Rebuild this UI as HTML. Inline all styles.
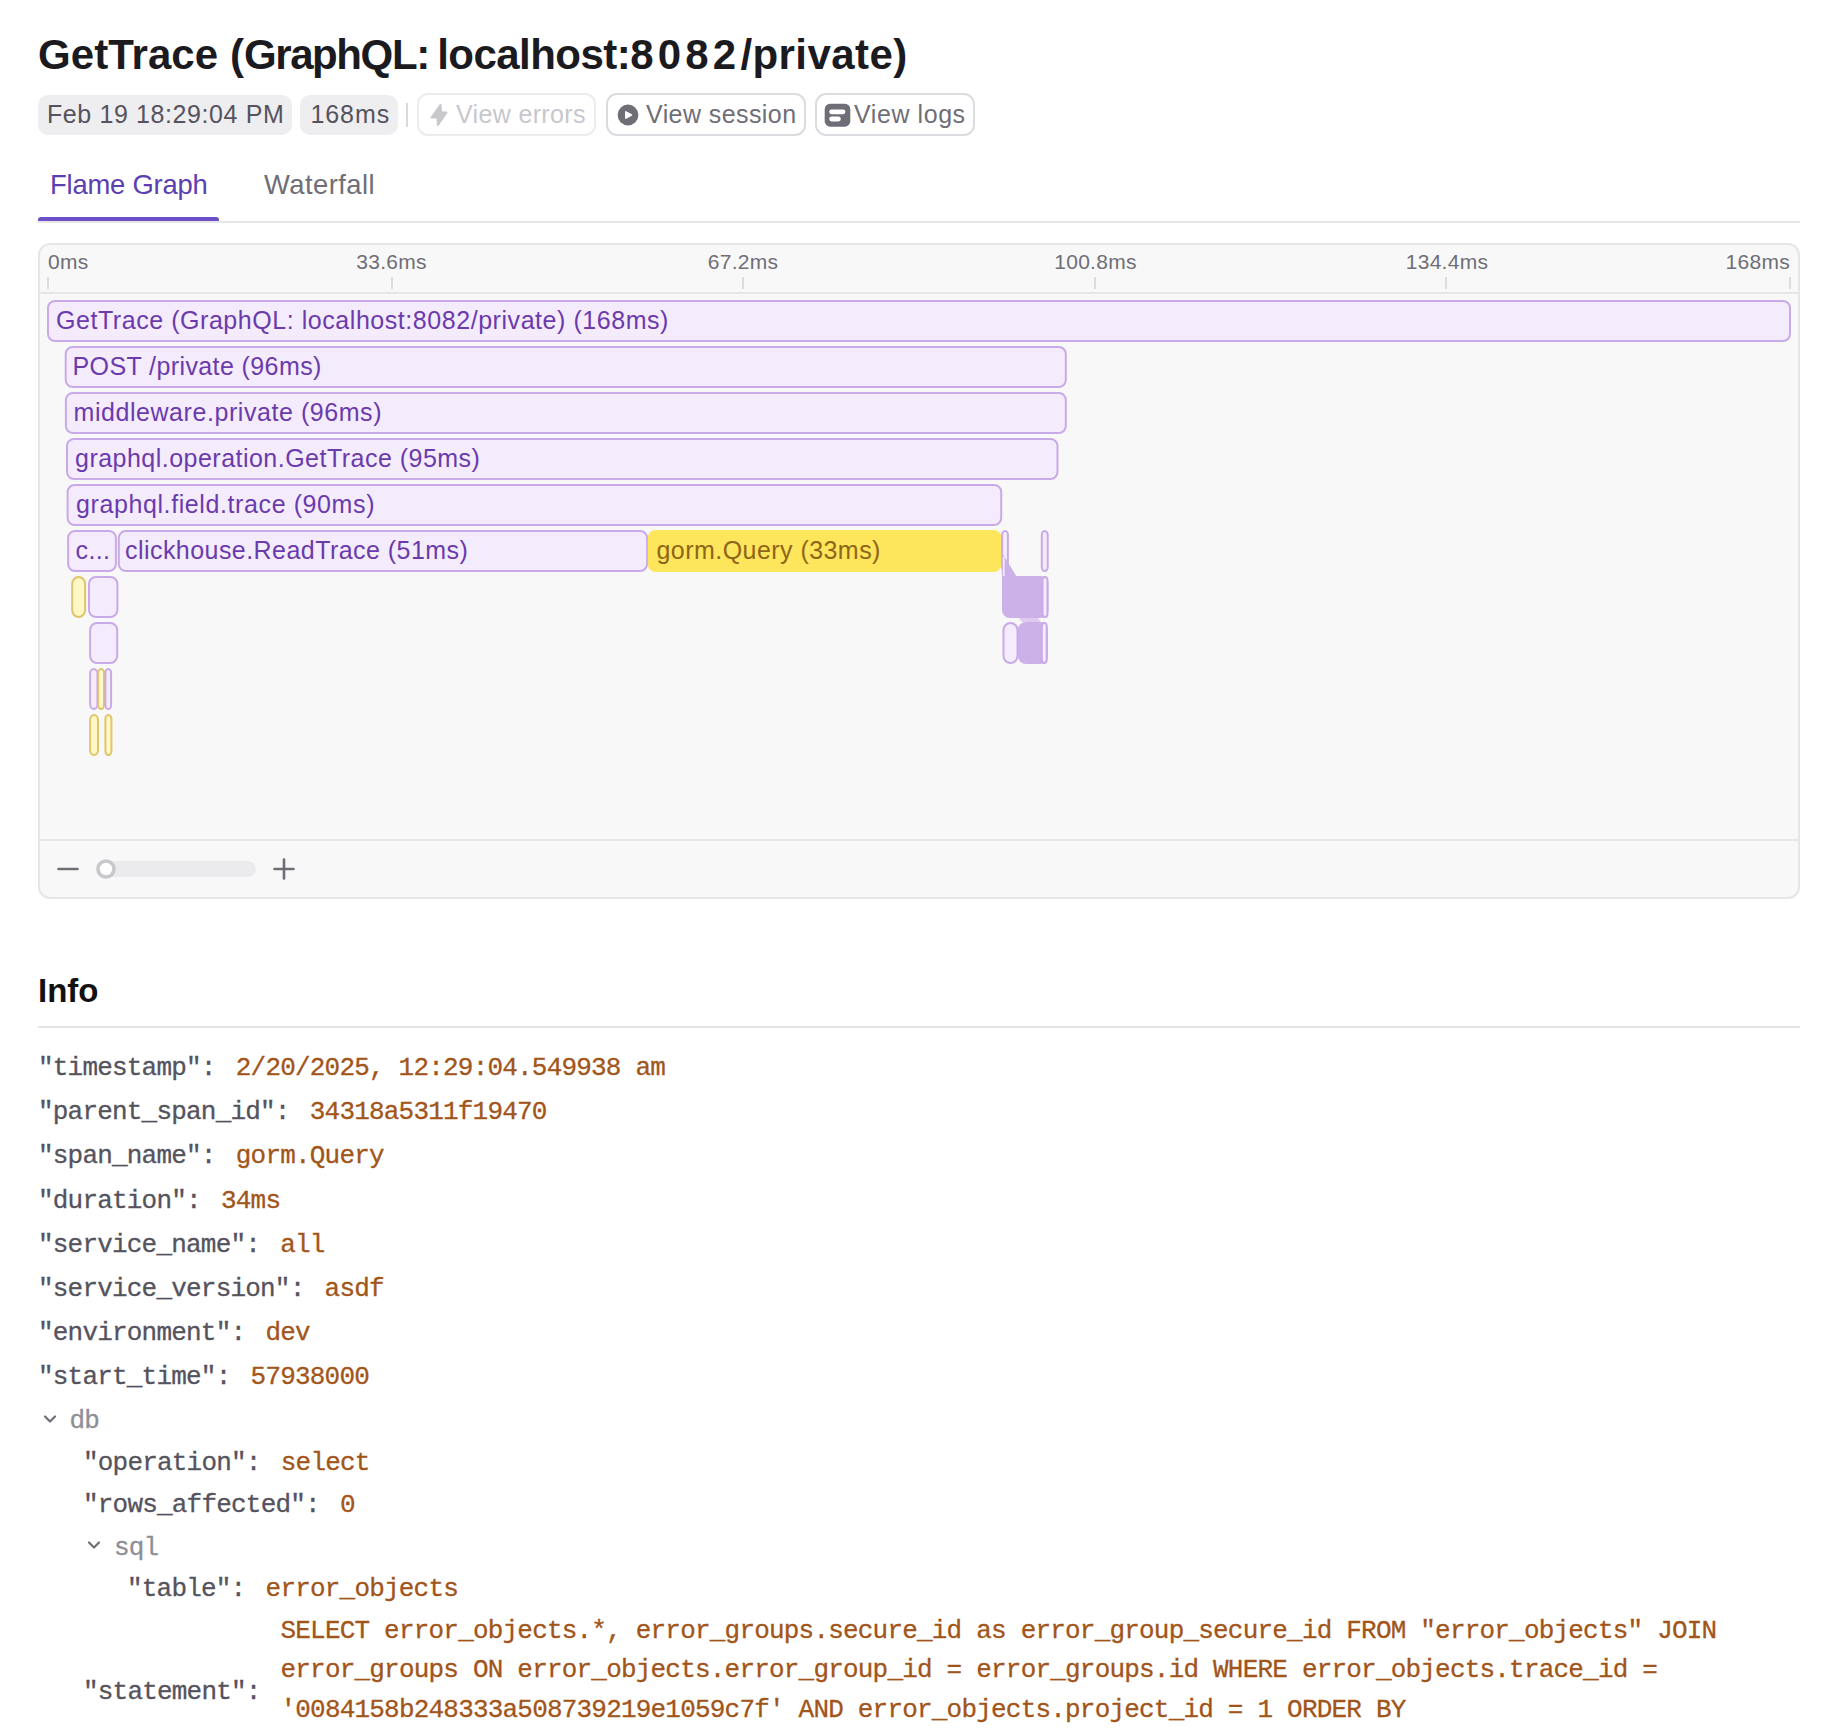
<!DOCTYPE html>
<html><head><meta charset="utf-8">
<style>
html,body{margin:0;padding:0;background:#fff;width:1840px;height:1732px;overflow:hidden;position:relative}
body{font-family:"Liberation Sans",sans-serif}
.a{position:absolute;white-space:pre;line-height:1}
.m{font-family:"Liberation Mono",monospace;font-size:26px;line-height:26px;letter-spacing:-0.8px;position:absolute;white-space:pre;color:#55535d;-webkit-text-stroke:0.3px currentColor}
.v{color:#a2551a}
.box{position:absolute;box-sizing:border-box}
</style></head><body>

<!-- Title -->
<div class="a" id="title" style="left:38px;top:34.3px;font-size:42px;font-weight:bold;color:#1b1b1f;letter-spacing:0.05px">GetTrace (<span style="letter-spacing:-1.4px">GraphQL:</span><span style="letter-spacing:-3.2px"> </span><span style="letter-spacing:-0.54px">localhost:</span><span style="letter-spacing:4.2px">8082</span><span style="letter-spacing:0.42px">/private)</span></div>

<!-- badges -->
<div class="box" style="left:38px;top:95px;width:254px;height:40px;background:#eeeef0;border-radius:10px"></div>
<div class="a" style="left:47px;top:101.75px;font-size:25px;color:#55535d;letter-spacing:0.6px">Feb 19 18:29:04 PM</div>
<div class="box" style="left:300px;top:95px;width:98px;height:40px;background:#eeeef0;border-radius:10px"></div>
<div class="a" style="left:310.5px;top:101.75px;font-size:25px;color:#55535d;letter-spacing:0.9px">168ms</div>
<div class="box" style="left:406px;top:103px;width:2px;height:24px;background:#d9d9de"></div>

<!-- buttons -->
<div class="box" style="left:417px;top:93px;width:179px;height:43px;border:2px solid #ececee;border-radius:11px"></div>
<svg class="box" style="left:428px;top:102px" width="22" height="26" viewBox="0 0 22 26"><path d="M12.6 2.6 L3.5 15.6 L9.3 15.6 L9.9 23.2 L18.6 10.4 L13.1 10.4 Z" fill="#c8c7cc" stroke="#c8c7cc" stroke-width="1.8" stroke-linejoin="round"/></svg>
<div class="a" style="left:456px;top:101.75px;font-size:25px;color:#c8c7cc;letter-spacing:0.35px">View errors</div>

<div class="box" style="left:605.5px;top:93px;width:200px;height:43px;border:2px solid #dcdbdf;border-radius:11px"></div>
<svg class="box" style="left:617px;top:104px" width="22" height="22" viewBox="0 0 22 22"><circle cx="11" cy="11" r="10.4" fill="#6f6e77"/><path d="M8.9 7.9 L14.3 11 L8.9 14.1 Z" fill="#fff" stroke="#fff" stroke-width="1.7" stroke-linejoin="round"/></svg>
<div class="a" style="left:646px;top:101.75px;font-size:25px;color:#6f6e77;letter-spacing:0.42px">View session</div>

<div class="box" style="left:814.5px;top:93px;width:160px;height:43px;border:2px solid #dcdbdf;border-radius:11px"></div>
<svg class="box" style="left:823.5px;top:102.5px" width="28" height="25" viewBox="0 0 28 25"><rect x="0.7" y="0.7" width="25.6" height="23" rx="5.5" fill="#6f6e77"/><rect x="5.2" y="6.5" width="16.2" height="4.7" rx="2.35" fill="#fff"/><rect x="5.2" y="13.5" width="11.6" height="4.9" rx="2.45" fill="#fff"/></svg>
<div class="a" style="left:854px;top:101.75px;font-size:25px;color:#6f6e77;letter-spacing:0.57px">View logs</div>

<!-- tabs -->
<div class="a" style="left:50px;top:171.4px;font-size:27.4px;color:#5a40b0;letter-spacing:-0.2px">Flame Graph</div>
<div class="a" style="left:264px;top:171.4px;font-size:27.4px;color:#6f6e77;letter-spacing:0.45px">Waterfall</div>
<div class="box" style="left:38px;top:221px;width:1762px;height:2px;background:#e6e6e9"></div>
<div class="box" style="left:38px;top:217px;width:181px;height:4px;background:#6c50c8;border-radius:3px 3px 0 0"></div>

<!-- graph container -->
<div class="box" style="left:38px;top:243px;width:1762px;height:656px;background:#f8f8f8;border:2px solid #e6e5e8;border-radius:12px"></div>
<div class="box" style="left:40px;top:292px;width:1758px;height:2px;background:#e6e5e8"></div>
<div class="box" style="left:40px;top:839px;width:1758px;height:2px;background:#e6e5e8"></div>

<!--FLAME-->
<div class="box" style="left:47.00px;top:277px;width:2px;height:12px;background:#dcdbdf"></div>
<div class="box" style="left:390.75px;top:277px;width:2px;height:12px;background:#dcdbdf"></div>
<div class="box" style="left:742.00px;top:277px;width:2px;height:12px;background:#dcdbdf"></div>
<div class="box" style="left:1093.50px;top:277px;width:2px;height:12px;background:#dcdbdf"></div>
<div class="box" style="left:1445.00px;top:277px;width:2px;height:12px;background:#dcdbdf"></div>
<div class="box" style="left:1789.00px;top:277px;width:2px;height:12px;background:#dcdbdf"></div>
<div class="a" style="left:48px;top:251.15px;font-size:21px;color:#6f6e77;letter-spacing:0.28px">0ms</div>
<div class="a" style="left:391.6px;transform:translateX(-50%);top:251.15px;font-size:21px;color:#6f6e77;letter-spacing:0.28px">33.6ms</div>
<div class="a" style="left:743px;transform:translateX(-50%);top:251.15px;font-size:21px;color:#6f6e77;letter-spacing:0.28px">67.2ms</div>
<div class="a" style="left:1095.5px;transform:translateX(-50%);top:251.15px;font-size:21px;color:#6f6e77;letter-spacing:0.28px">100.8ms</div>
<div class="a" style="left:1447px;transform:translateX(-50%);top:251.15px;font-size:21px;color:#6f6e77;letter-spacing:0.28px">134.4ms</div>
<div class="a" style="right:50px;top:251.15px;font-size:21px;color:#6f6e77;letter-spacing:0.28px">168ms</div>
<svg class="box" style="left:0;top:0" width="1840" height="900" viewBox="0 0 1840 900"><rect x="48.00" y="301" width="1742.00" height="40" rx="7.00" fill="#f4ecfc" stroke="#c9aae8" stroke-width="2"/><rect x="65.70" y="347" width="1000.10" height="40" rx="7.00" fill="#f4ecfc" stroke="#c9aae8" stroke-width="2"/><rect x="65.90" y="393" width="999.90" height="40" rx="7.00" fill="#f4ecfc" stroke="#c9aae8" stroke-width="2"/><rect x="67.00" y="439" width="990.50" height="40" rx="7.00" fill="#f4ecfc" stroke="#c9aae8" stroke-width="2"/><rect x="67.60" y="485" width="933.60" height="40" rx="7.00" fill="#f4ecfc" stroke="#c9aae8" stroke-width="2"/><rect x="68.10" y="531" width="47.80" height="40" rx="7.00" fill="#f4ecfc" stroke="#c9aae8" stroke-width="2"/><rect x="118.80" y="531" width="528.30" height="40" rx="7.00" fill="#f4ecfc" stroke="#c9aae8" stroke-width="2"/><rect x="647.80" y="530" width="353.70" height="42" rx="8.00" fill="#fde65b"/><rect x="1002.10" y="531" width="5.80" height="40" rx="3.90" fill="#f4ecfc" stroke="#c9aae8" stroke-width="2"/><polygon points="1001,551 1016.3,576 1002,576" fill="#cbb1e8"/><rect x="1002.9" y="557" width="1.7" height="19" fill="#f4ecfc"/><rect x="1041.80" y="531" width="5.90" height="40" rx="3.95" fill="#f4ecfc" stroke="#c9aae8" stroke-width="2"/><rect x="72.20" y="577" width="12.90" height="40" rx="7.00" fill="#fff8c4" stroke="#dfc56b" stroke-width="2"/><rect x="89.00" y="577" width="28.40" height="40" rx="7.00" fill="#f4ecfc" stroke="#c9aae8" stroke-width="2"/><rect x="1002" y="576" width="46.5" height="42" rx="8" fill="#cbb1e8"/><rect x="1002" y="576" width="12" height="12" fill="#cbb1e8"/><rect x="1042.50" y="577" width="5.00" height="40" rx="3.50" fill="#f4ecfc" stroke="#c9aae8" stroke-width="2"/><rect x="90.10" y="623" width="27.10" height="40" rx="7.00" fill="#f4ecfc" stroke="#c9aae8" stroke-width="2"/><rect x="1018" y="622" width="30" height="42" rx="8" fill="#cbb1e8"/><polygon points="1019,618 1038,618 1041,622 1022,622" fill="#dccaf0"/><rect x="1003.50" y="623" width="14.00" height="40" rx="7.00" fill="#f4ecfc" stroke="#c9aae8" stroke-width="2"/><rect x="1041.80" y="623" width="4.90" height="40" rx="3.45" fill="#f4ecfc" stroke="#c9aae8" stroke-width="2"/><rect x="90.10" y="669" width="7.30" height="40" rx="4.65" fill="#f4ecfc" stroke="#c9aae8" stroke-width="2"/><rect x="98.10" y="669" width="5.90" height="40" rx="3.95" fill="#fff8c4" stroke="#dfc56b" stroke-width="2"/><rect x="105.40" y="669" width="5.70" height="40" rx="3.85" fill="#f4ecfc" stroke="#c9aae8" stroke-width="2"/><rect x="90.10" y="715" width="7.90" height="40" rx="4.95" fill="#fff8c4" stroke="#dfc56b" stroke-width="2"/><rect x="105.40" y="715" width="6.00" height="40" rx="4.00" fill="#fff8c4" stroke="#dfc56b" stroke-width="2"/></svg>
<div class="a" style="left:56px;top:307.75px;font-size:25px;color:#6b3aad;letter-spacing:0.55px">GetTrace (GraphQL: localhost:8082/private) (168ms)</div>
<div class="a" style="left:72.5px;top:353.75px;font-size:25px;color:#6b3aad;letter-spacing:0.4px">POST /private (96ms)</div>
<div class="a" style="left:73.5px;top:399.75px;font-size:25px;color:#6b3aad;letter-spacing:0.56px">middleware.private (96ms)</div>
<div class="a" style="left:75px;top:445.75px;font-size:25px;color:#6b3aad;letter-spacing:0.48px">graphql.operation.GetTrace (95ms)</div>
<div class="a" style="left:76px;top:491.75px;font-size:25px;color:#6b3aad;letter-spacing:0.6px">graphql.field.trace (90ms)</div>
<div class="a" style="left:75.5px;top:537.75px;font-size:25px;color:#6b3aad;letter-spacing:0.4px">c...</div>
<div class="a" style="left:125px;top:537.75px;font-size:25px;color:#6b3aad;letter-spacing:0.45px">clickhouse.ReadTrace (51ms)</div>
<div class="a" style="left:656.5px;top:537.75px;font-size:25px;color:#8f6519;letter-spacing:0.45px">gorm.Query (33ms)</div>
<svg class="box" style="left:40px;top:841px" width="300" height="56" viewBox="40 841 300 56">
<line x1="58.5" y1="869" x2="77.5" y2="869" stroke="#6f6e77" stroke-width="2.6" stroke-linecap="round"/>
<rect x="96" y="861" width="160" height="16" rx="8" fill="#ebebee"/>
<circle cx="106" cy="869" r="8" fill="#fff" stroke="#c8c7cc" stroke-width="3.6"/>
<line x1="274.5" y1="869" x2="293.5" y2="869" stroke="#6f6e77" stroke-width="2.6" stroke-linecap="round"/>
<line x1="284" y1="859.5" x2="284" y2="878.5" stroke="#6f6e77" stroke-width="2.6" stroke-linecap="round"/>
</svg>
<!--/FLAME-->

<!-- Info -->
<div class="a" style="left:38px;top:973.6px;font-size:33px;font-weight:bold;color:#111;letter-spacing:0px">Info</div>
<div class="box" style="left:38px;top:1026px;width:1762px;height:2px;background:#e6e6e9"></div>

<!--JSON-->
<div class="m" style="left:38.00px;top:1055.08px;">"timestamp":</div>
<div class="m v" style="left:235.80px;top:1055.08px;">2/20/2025, 12:29:04.549938 am</div>
<div class="m" style="left:38.00px;top:1099.28px;">"parent_span_id":</div>
<div class="m v" style="left:309.80px;top:1099.28px;">34318a5311f19470</div>
<div class="m" style="left:38.00px;top:1143.38px;">"span_name":</div>
<div class="m v" style="left:235.80px;top:1143.38px;">gorm.Query</div>
<div class="m" style="left:38.00px;top:1187.58px;">"duration":</div>
<div class="m v" style="left:221.00px;top:1187.58px;">34ms</div>
<div class="m" style="left:38.00px;top:1231.68px;">"service_name":</div>
<div class="m v" style="left:280.20px;top:1231.68px;">all</div>
<div class="m" style="left:38.00px;top:1275.88px;">"service_version":</div>
<div class="m v" style="left:324.60px;top:1275.88px;">asdf</div>
<div class="m" style="left:38.00px;top:1319.98px;">"environment":</div>
<div class="m v" style="left:265.40px;top:1319.98px;">dev</div>
<div class="m" style="left:38.00px;top:1364.08px;">"start_time":</div>
<div class="m v" style="left:250.60px;top:1364.08px;">57938000</div>
<div class="m" style="left:69.50px;top:1408.38px;color:#8f8e96">db</div>
<svg class="box" style="left:42px;top:1411.3px" width="16" height="16" viewBox="42 1411.3 16 16"><polyline points="45,1416.8 50,1421.8 55,1416.8" fill="none" stroke="#6f6e77" stroke-width="2.2" stroke-linecap="round" stroke-linejoin="round"/></svg>
<div class="m" style="left:83.00px;top:1449.58px;">"operation":</div>
<div class="m v" style="left:280.80px;top:1449.58px;">select</div>
<div class="m" style="left:83.00px;top:1492.08px;">"rows_affected":</div>
<div class="m v" style="left:340.00px;top:1492.08px;">0</div>
<div class="m" style="left:114.00px;top:1534.58px;color:#8f8e96">sql</div>
<svg class="box" style="left:86px;top:1537px" width="16" height="16" viewBox="86 1537 16 16"><polyline points="89,1542.5 94,1547.5 99,1542.5" fill="none" stroke="#6f6e77" stroke-width="2.2" stroke-linecap="round" stroke-linejoin="round"/></svg>
<div class="m" style="left:127.00px;top:1576.08px;">"table":</div>
<div class="m v" style="left:265.60px;top:1576.08px;">error_objects</div>
<div class="m" style="left:83.00px;top:1678.78px;">"statement":</div>
<div class="m v" style="left:280.50px;top:1618.38px;">SELECT error_objects.*, error_groups.secure_id as error_group_secure_id FROM "error_objects" JOIN</div>
<div class="m v" style="left:280.50px;top:1657.48px;">error_groups ON error_objects.error_group_id = error_groups.id WHERE error_objects.trace_id =</div>
<div class="m v" style="left:280.50px;top:1697.28px;">'0084158b248333a508739219e1059c7f' AND error_objects.project_id = 1 ORDER BY</div>
<div class="m v" style="left:280.50px;top:1737.08px;">error_objects.id DESC LIMIT 1</div>
<!--/JSON-->

</body></html>
